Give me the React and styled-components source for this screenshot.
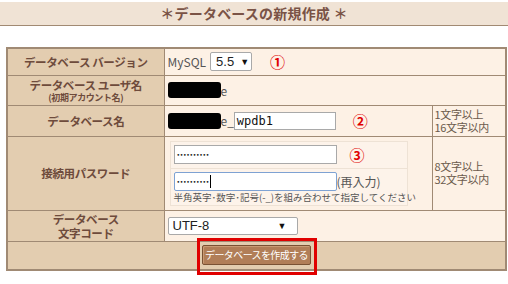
import styled, { createGlobalStyle } from "styled-components"

const GlobalStyle = createGlobalStyle`
    html, body {
        margin: 0;
        padding: 0;
        background: #fff;
    }
    body {
        font-family: "Noto Sans CJK JP", "Liberation Sans", sans-serif;
        width: 508px;
        height: 284px;
        overflow: hidden;
    }
`

export default function App() {
    return (
        <>
            <GlobalStyle />
            <Page>
                <Header>＊データベースの新規作成 ＊</Header>

                <Table>
                    <colgroup>
                        <Col $w={157} />
                        <Col $w={268} />
                        <Col $w={74} />
                    </colgroup>
                    <tbody>
                        <Row $h={27}>
                            <Label>データベース バージョン</Label>
                            <Value colSpan={2}>
                                <Line>
                                    <Plain>MySQL</Plain>
                                    <SmallSelect>5.5 <Arrow>▼</Arrow></SmallSelect>
                                    <Num $ml={18}>①</Num>
                                </Line>
                            </Value>
                        </Row>

                        <Row $h={30}>
                            <Label>
                                データベース ユーザ名
                                <Sub>(初期アカウント名)</Sub>
                            </Label>
                            <Value colSpan={2}>
                                <Line>
                                    <Redact />
                                    <Plain>e</Plain>
                                </Line>
                            </Value>
                        </Row>

                        <Row $h={31}>
                            <Label>データベース名</Label>
                            <Value>
                                <Line>
                                    <Redact />
                                    <Plain>e_</Plain>
                                    <TextBox $w={102}>wpdb1</TextBox>
                                    <Num $ml={17}>②</Num>
                                </Line>
                            </Value>
                            <Note>1文字以上<br />16文字以内</Note>
                        </Row>

                        <Row $h={74}>
                            <Label>接続用パスワード</Label>
                            <Value>
                                <PassBox>
                                    <PassPart>
                                        <Line>
                                            <PassInput><Dots>••••••••••</Dots></PassInput>
                                            <Num $ml={13}>③</Num>
                                        </Line>
                                    </PassPart>
                                    <PassPart $last>
                                        <Line>
                                            <PassInput $focus>
                                                <Dots>••••••••••</Dots><Caret />
                                            </PassInput>
                                            <Plain>(再入力)</Plain>
                                        </Line>
                                        <Hint>半角英字･数字･記号(-_)を組み合わせて指定してください</Hint>
                                    </PassPart>
                                </PassBox>
                            </Value>
                            <Note>8文字以上<br />32文字以内</Note>
                        </Row>

                        <Row $h={31}>
                            <Label>データベース<br />文字コード</Label>
                            <Value colSpan={2}>
                                <WideSelect>UTF-8 <Arrow>▼</Arrow></WideSelect>
                            </Value>
                        </Row>

                        <Row $h={29}>
                            <ButtonCell colSpan={3}>
                                <Highlight>
                                    <Button>データベースを作成する</Button>
                                    <RedFrame />
                                </Highlight>
                            </ButtonCell>
                        </Row>
                    </tbody>
                </Table>
            </Page>
        </>
    )
}

const Page = styled.div`
    padding-top: 2px;
`

const Header = styled.div`
    height: 23px;
    line-height: 23px;
    background-color: #f0e3d5;
    border-bottom: 1px solid #a18a73;
    text-align: center;
    font-size: 14px;
    font-weight: bold;
    color: #7a5346;
    letter-spacing: 0.2px;
`

const Table = styled.table`
    margin: 21px 0 0 6px;
    width: 499px;
    border-collapse: collapse;
    border: 2px solid #a08a74;
    table-layout: fixed;
`

const Col = styled.col`
    width: ${(props) => props.$w}px;
`

const Row = styled.tr`
    height: ${(props) => props.$h}px;
`

const Label = styled.td`
    padding: 0;
    background-color: #e3cdb0;
    border: 1px solid #a08a74;
    text-align: center;
    font-size: 11.5px;
    font-weight: bold;
    letter-spacing: -0.4px;
    line-height: 14px;
    color: #6e4b3c;
    white-space: nowrap;
`

const Sub = styled.span`
    display: block;
    font-size: 9px;
    line-height: 11px;
`

const Value = styled.td`
    padding: 0 0 0 3px;
    background-color: #fdf1e5;
    border: 1px solid #a08a74;
    font-size: 12px;
    color: #333;
`

const Note = styled.td`
    padding: 0 0 0 2px;
    background-color: #fdf1e5;
    border: 1px solid #a08a74;
    font-size: 11px;
    line-height: 13px;
    letter-spacing: -0.3px;
    color: #6b5a4c;
    white-space: nowrap;
`

const Line = styled.div`
    display: flex;
    align-items: center;
`

const Plain = styled.span`
    font-size: 12px;
    color: #555;
    white-space: nowrap;
`

const SmallSelect = styled.div`
    display: flex;
    align-items: center;
    gap: 6px;
    margin-left: 4px;
    width: 42px;
    height: 19px;
    box-sizing: border-box;
    padding-left: 5px;
    background: #fff;
    border: 1px solid #a9a9a9;
    border-radius: 2px;
    font-family: "Liberation Sans", sans-serif;
    font-size: 13px;
    color: #222;
`

const Arrow = styled.span`
    font-size: 9px;
    color: #111;
`

const Num = styled.span`
    margin-left: ${(props) => props.$ml}px;
    font-size: 15px;
    line-height: 15px;
    font-weight: bold;
    color: #e00000;
`

const Redact = styled.div`
    width: 53px;
    height: 16px;
    background: #000;
    border-radius: 3px;
`

const TextBox = styled.div`
    width: ${(props) => props.$w}px;
    height: 18px;
    box-sizing: border-box;
    padding-left: 2px;
    background: #fff;
    border: 1px solid #a9a9a9;
    font-family: "DejaVu Sans Mono", monospace;
    font-size: 12px;
    line-height: 16px;
    color: #111;
`

const PassBox = styled.div`
    width: 236px;
    margin-left: 2px;
    border: 1px solid #eee2d5;
    background: #fdf3ea;
`

const PassPart = styled.div`
    padding: 3px 0 ${(props) => (props.$last ? "2px" : "4px")} 3px;
    border-top: ${(props) => (props.$last ? "1px solid #eee2d5" : "none")};
`

const PassInput = styled.div`
    display: flex;
    align-items: center;
    width: 163px;
    height: 19px;
    flex-shrink: 0;
    box-sizing: border-box;
    padding-left: 2px;
    background: #fff;
    border: 1px solid ${(props) => (props.$focus ? "#7ea2d3" : "#a9a9a9")};
    border-radius: ${(props) => (props.$focus ? "2px" : "0")};
`

const Dots = styled.span`
    font-family: "DejaVu Sans", sans-serif;
    font-size: 6px;
    letter-spacing: -0.3px;
    color: #111;
`

const Caret = styled.span`
    width: 1px;
    height: 13px;
    margin-left: 1px;
    background: #000;
`

const Hint = styled.div`
    margin-top: 1px;
    font-size: 9.5px;
    line-height: 11px;
    color: #555;
    white-space: nowrap;
`

const WideSelect = styled.div`
    display: flex;
    align-items: center;
    justify-content: space-between;
    width: 130px;
    height: 18px;
    box-sizing: border-box;
    padding: 0 10px 0 4px;
    background: #fff;
    border: 1px solid #a9a9a9;
    border-radius: 2px;
    font-family: "Liberation Sans", sans-serif;
    font-size: 13px;
    color: #222;
`

const ButtonCell = styled.td`
    padding: 0;
    background-color: #e3cdb0;
    border: 1px solid #a08a74;
    text-align: center;
`

const Highlight = styled.div`
    position: relative;
    display: inline-block;
    margin-top: 2px;
    vertical-align: top;
`

const Button = styled.div`
    width: 109px;
    height: 20px;
    box-sizing: border-box;
    background: #b17e58;
    border: 1px solid #7a5234;
    border-radius: 2px;
    box-shadow: inset 1px 1px 0 #c99a74;
    color: #fff;
    font-size: 10px;
    letter-spacing: -0.6px;
    line-height: 18px;
    text-align: center;
    white-space: nowrap;
`

const RedFrame = styled.span`
    position: absolute;
    top: -7px;
    left: -5px;
    right: -6px;
    bottom: -10px;
    border: 3px solid #e00000;
    pointer-events: none;
`
